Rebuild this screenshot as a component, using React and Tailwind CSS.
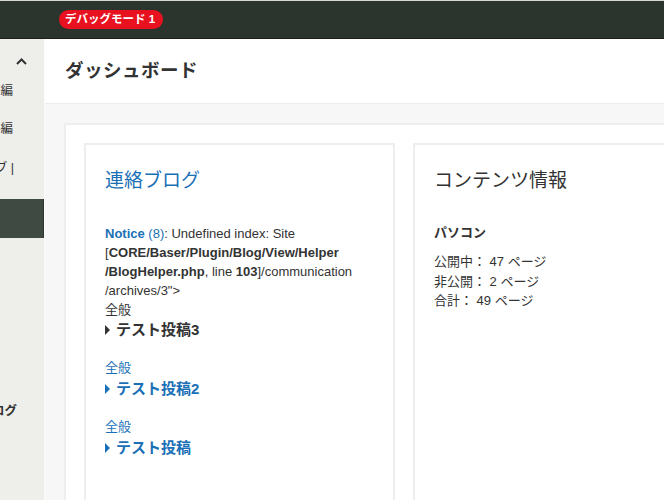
import React from 'react';

const posts = [
  { cat: '全般', title: 'テスト投稿2' },
  { cat: '全般', title: 'テスト投稿' },
];

function Caret({ className }) {
  return <span className={`inline-block w-0 h-0 border-y-[5px] border-y-transparent border-l-[5px] mr-[6px] ${className}`} />;
}

export default function App() {
  return (
    <div className="w-[664px] h-[500px] overflow-hidden bg-[#f7f7f7] text-[#333] font-['Liberation_Sans','Noto_Sans_CJK_JP',sans-serif]">
      <header className="h-[39px] bg-[#2c342e] border-t border-[#d6d6d6] border-b border-b-[#1b201c] flex items-center pl-[59px]">
        <span className="h-[19px] w-[104px] rounded-full bg-[#e8111f] text-white text-[11.5px] font-bold flex items-center pl-[6px] whitespace-nowrap">
          デバッグモード 1
        </span>
      </header>

      <div className="flex">
        <aside className="w-[45px] shrink-0 bg-[#eeeeea] h-[461px] text-[12.5px] border-r border-[#fbfbfb]">
          <div className="h-[33px] flex items-end justify-end pr-[17px]">
            <svg width="11" height="7" viewBox="0 0 11 7" className="mb-[7px]">
              <path d="M1 6 L5.5 1.5 L10 6" fill="none" stroke="#333" strokeWidth="2" />
            </svg>
          </div>
          <div className="h-[38.5px] flex items-center justify-end overflow-hidden whitespace-nowrap pr-[31px]">記事編</div>
          <div className="h-[38.5px] flex items-center justify-end overflow-hidden whitespace-nowrap pr-[31px]">記事編</div>
          <div className="h-[38.5px] flex items-center justify-end overflow-hidden whitespace-nowrap pr-[30px]">ブログ | ブ |</div>
          <div className="h-[11px]" />
          <div className="h-[39px] bg-[#3e4a42] border-r border-[#2c352f]" />
          <div className="h-[164px]" />
          <div className="h-[20px] flex items-center justify-end overflow-hidden whitespace-nowrap pr-[27px] font-bold">ブログ</div>
        </aside>

        <main className="flex-1 min-w-0">
          <div className="h-[65px] bg-white border-b border-[#ececec] flex items-center pl-[20px]">
            <h1 className="text-[18.5px] font-bold text-[#333] tracking-[0.5px]">ダッシュボード</h1>
          </div>

          <div className="pt-[19px] pl-[19px]">
            <div className="bg-white border-2 border-[#eeeeee] p-[18px] flex gap-[18px] w-[760px] h-[400px]">
              <section className="w-[311px] shrink-0 border-2 border-[#eeeeee] pt-[22px] px-[19px]">
                <h2 className="text-[19px] leading-[28px] text-[#1a70b6]">連絡ブログ</h2>
                <div className="mt-[29px] text-[13px] leading-[19px]">
                  <p>
                    <b className="text-[#1a70b6]">Notice</b>
                    <span className="text-[#1a70b6]"> (8)</span>: Undefined index: Site [
                    <b>CORE/Baser/Plugin/Blog/View/Helper /BlogHelper.php</b>, line <b>103</b>]/communication /archives/3"&gt;
                  </p>
                  <p>全般</p>
                </div>
                <div className="h-[22px] flex items-center text-[15px] font-bold text-[#333]">
                  <Caret className="border-l-[#333]" />
                  テスト投稿3
                </div>
                {posts.map((p) => (
                  <div key={p.title} className="mt-[17px] text-[#1a70b6]">
                    <div className="h-[20px] flex items-center text-[13px]">{p.cat}</div>
                    <div className="h-[22px] flex items-center text-[15px] font-bold">
                      <Caret className="border-l-[#1a70b6]" />
                      {p.title}
                    </div>
                  </div>
                ))}
              </section>

              <section className="w-[311px] shrink-0 border-2 border-[#eeeeee] pt-[22px] px-[19px]">
                <h2 className="text-[19px] leading-[28px] text-[#333]">コンテンツ情報</h2>
                <div className="mt-[28px] text-[13px] leading-[19px] font-bold">パソコン</div>
                <div className="mt-[10px] text-[13px] leading-[19.5px]">
                  <p>公開中： 47 ページ</p>
                  <p>非公開： 2 ページ</p>
                  <p>合計： 49 ページ</p>
                </div>
              </section>
            </div>
          </div>
        </main>
      </div>
    </div>
  );
}
